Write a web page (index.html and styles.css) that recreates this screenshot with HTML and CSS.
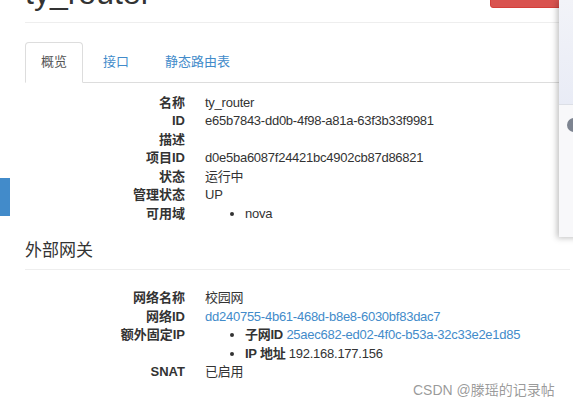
FILE: index.html
```html
<!DOCTYPE html>
<html lang="zh-CN">
<head>
  <meta charset="UTF-8">
  <meta name="viewport" content="width=device-width, initial-scale=1">
  <title>ty_router</title>
  <link rel="stylesheet" href="styles.css">
</head>
<body>
  <div class="side-tab"></div>

  <div class="main">
    <div class="page-header">
      <h1>ty_router</h1>
      <button class="btn-danger">删除路由</button>
    </div>

    <ul class="nav-tabs">
      <li class="active"><a href="#">概览</a></li>
      <li><a href="#">接口</a></li>
      <li><a href="#">静态路由表</a></li>
    </ul>

    <!-- Router overview -->
    <dl class="info">
      <dt>名称</dt><dd>ty_router</dd>
      <dt>ID</dt><dd>e65b7843-dd0b-4f98-a81a-63f3b33f9981</dd>
      <dt>描述</dt><dd></dd>
      <dt>项目ID</dt><dd>d0e5ba6087f24421bc4902cb87d86821</dd>
      <dt>状态</dt><dd>运行中</dd>
      <dt>管理状态</dt><dd>UP</dd>
      <dt>可用域</dt>
      <dd>
        <ul>
          <li>nova</li>
        </ul>
      </dd>
    </dl>

    <h4 class="section-title">外部网关</h4>

    <dl class="info info-gateway">
      <dt>网络名称</dt><dd>校园网</dd>
      <dt>网络ID</dt><dd><a href="#">dd240755-4b61-468d-b8e8-6030bf83dac7</a></dd>
      <dt>额外固定IP</dt>
      <dd>
        <ul>
          <li><strong>子网ID</strong> <a href="#">25aec682-ed02-4f0c-b53a-32c33e2e1d85</a></li>
          <li><strong>IP 地址</strong> 192.168.177.156</li>
        </ul>
      </dd>
      <dt>SNAT</dt><dd>已启用</dd>
    </dl>
  </div>

  <!-- Side drawer peeking in from the right -->
  <div class="drawer">
    <div class="drawer-top"></div>
    <div class="drawer-body">
      <span class="avatar"></span>
    </div>
  </div>

  <div class="watermark">CSDN @滕瑶的记录帖</div>
</body>
</html>
```

FILE: styles.css
```css
/* Reset & Base Styles */
* {
  box-sizing: border-box;
  margin: 0;
  padding: 0;
}
body {
  font-family: "Liberation Sans", "Noto Sans CJK SC", sans-serif;
  font-size: 13px;
  line-height: 18.5px;
  color: #333;
  background: #fff;
  height: 407px;
  overflow: hidden;
  position: relative;
}
a {
  color: #428bca;
  text-decoration: none;
}
.main {
  margin-top: -24px;
  padding: 0 3px 0 25px;
}

/* Page header */
.page-header {
  display: flex;
  justify-content: space-between;
  align-items: flex-start;
  padding-bottom: 11px;
  border-bottom: 1px solid #eee;
}
.page-header h1 {
  font-size: 32px;
  line-height: 35px;
  font-weight: normal;
  color: #333;
}
.btn-danger {
  margin-top: 2px;
  width: 80px;
  height: 30px;
  background: #d9534f;
  border: 1px solid #d43f3a;
  border-radius: 3px;
  color: #fff;
  font: inherit;
}

/* Tabs */
.nav-tabs {
  display: flex;
  list-style: none;
  margin-top: 19px;
  border-bottom: 1px solid #ddd;
}
.nav-tabs li {
  margin-bottom: -1px;
  margin-right: 4px;
}
.nav-tabs a {
  display: block;
  padding: 10px 15px;
  border: 1px solid transparent;
  border-radius: 4px 4px 0 0;
  color: #428bca;
}
.nav-tabs .active a {
  color: #555;
  background: #fff;
  border-color: #ddd #ddd transparent;
}

/* Detail lists */
.info {
  display: grid;
  grid-template-columns: 160px 1fr;
  column-gap: 20px;
  margin-top: 11px;
}
.info dt {
  font-weight: bold;
  text-align: right;
  white-space: nowrap;
}
.info dd {
  letter-spacing: -0.25px;
  white-space: nowrap;
}
.info ul {
  padding-left: 40px;
}
.info-gateway {
  margin-top: 19px;
}
.section-title {
  margin-top: 18px;
  padding-bottom: 9px;
  font-size: 17px;
  line-height: 19px;
  font-weight: normal;
  color: #333;
  border-bottom: 1px solid #eee;
}

/* Overlays */
.side-tab {
  position: absolute;
  left: 0;
  top: 178px;
  width: 10px;
  height: 38px;
  background: #428bca;
}
.drawer {
  position: absolute;
  left: 559px;
  top: 0;
  width: 30px;
  height: 237px;
  background: #f8f8fa;
  box-shadow: -2px 1px 6px rgba(0,0,0,0.25);
  display: flex;
  flex-direction: column;
}
.drawer-top {
  height: 105px;
  background: linear-gradient(180deg, #f2f3f8, #e9ecf6);
  border-bottom: 1px solid #dcdfe6;
}
.drawer-body {
  flex: 1;
  padding: 13px 0 0 8px;
}
.avatar {
  display: block;
  width: 14px;
  height: 14px;
  border-radius: 50%;
  background: #7d8491;
}
.watermark {
  position: absolute;
  left: 413px;
  top: 381px;
  font-size: 14px;
  line-height: 18px;
  color: rgba(110,110,110,0.7);
}
```
